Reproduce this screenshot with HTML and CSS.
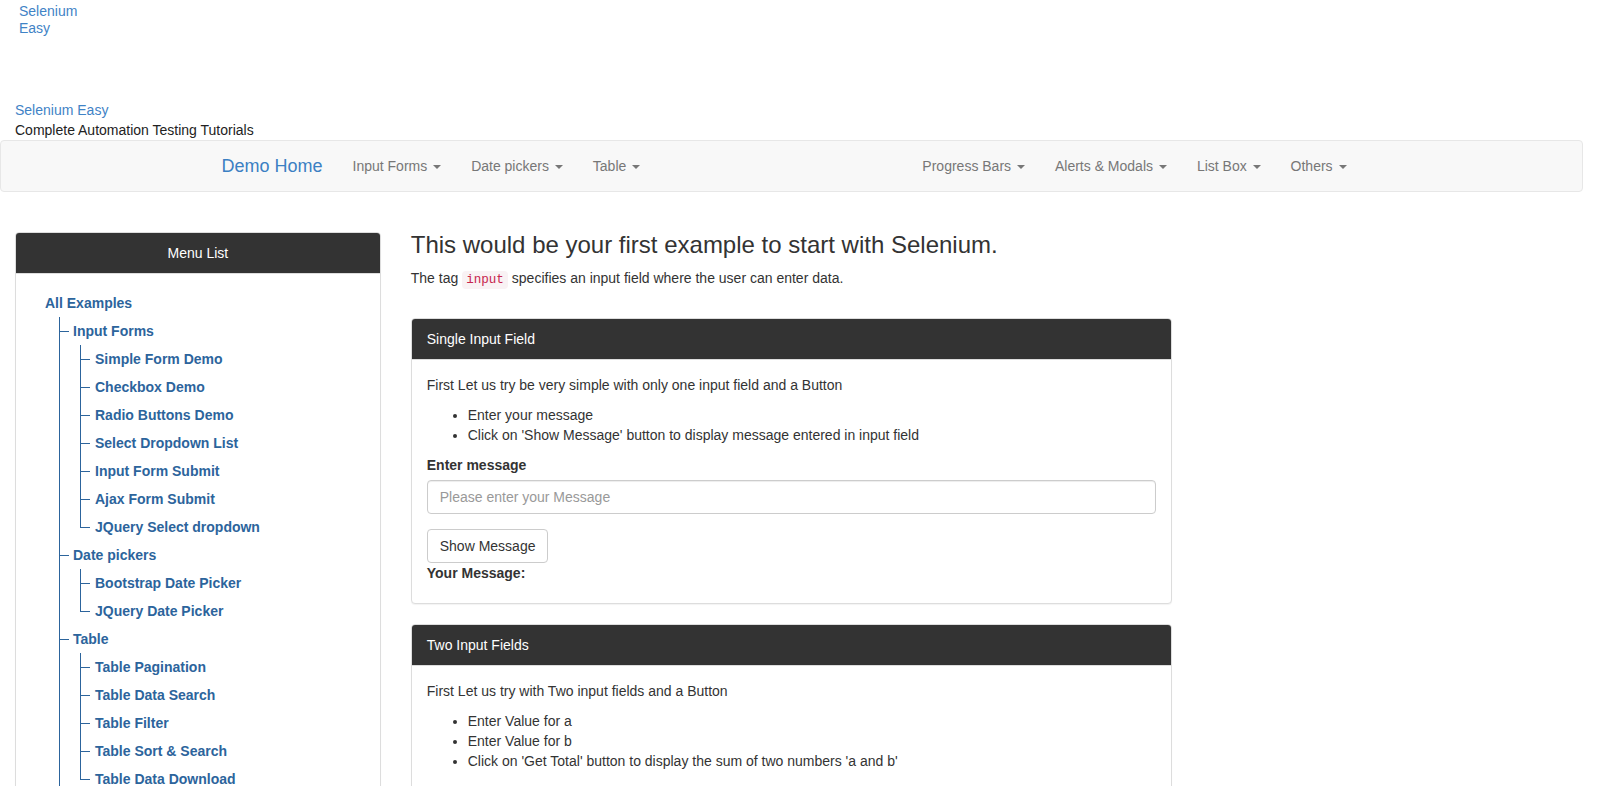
FILE: index.html
```html
<!DOCTYPE html>
<html lang="en">
<head>
<meta charset="utf-8">
<title>Selenium Easy Demo - Simple Form to Automate using Selenium</title>
<link rel="stylesheet" href="styles.css">
</head>
<body>
<div class="page">
  <header class="site-header">
    <div class="logo"><a href="#">Selenium Easy</a></div>
    <div class="site-title">
      <a href="#">Selenium Easy</a>
      <div class="site-slogan">Complete Automation Testing Tutorials</div>
    </div>
  </header>

  <nav class="navbar">
    <div class="container">
      <a class="navbar-brand" href="#">Demo Home</a>
      <ul class="nav">
        <li><a href="#">Input Forms <span class="caret"></span></a></li>
        <li><a href="#">Date pickers <span class="caret"></span></a></li>
        <li><a href="#">Table <span class="caret"></span></a></li>
      </ul>
      <ul class="nav nav-right">
        <li><a href="#">Progress Bars <span class="caret"></span></a></li>
        <li><a href="#">Alerts &amp; Modals <span class="caret"></span></a></li>
        <li><a href="#">List Box <span class="caret"></span></a></li>
        <li><a href="#">Others <span class="caret"></span></a></li>
      </ul>
    </div>
  </nav>

  <div class="layout">
    <aside class="col-side">
      <div class="panel side-panel">
        <div class="panel-heading centered">Menu List</div>
        <div class="panel-body">
          <ul class="tree">
            <li class="root">
              <a href="#" class="node">All Examples</a>
              <ul class="branch lvl1">
                <li>
                  <a href="#" class="node">Input Forms</a>
                  <ul class="branch lvl2">
                    <li><a href="#" class="node">Simple Form Demo</a></li>
                    <li><a href="#" class="node">Checkbox Demo</a></li>
                    <li><a href="#" class="node">Radio Buttons Demo</a></li>
                    <li><a href="#" class="node">Select Dropdown List</a></li>
                    <li><a href="#" class="node">Input Form Submit</a></li>
                    <li><a href="#" class="node">Ajax Form Submit</a></li>
                    <li><a href="#" class="node">JQuery Select dropdown</a></li>
                  </ul>
                </li>
                <li>
                  <a href="#" class="node">Date pickers</a>
                  <ul class="branch lvl2">
                    <li><a href="#" class="node">Bootstrap Date Picker</a></li>
                    <li><a href="#" class="node">JQuery Date Picker</a></li>
                  </ul>
                </li>
                <li>
                  <a href="#" class="node">Table</a>
                  <ul class="branch lvl2">
                    <li><a href="#" class="node">Table Pagination</a></li>
                    <li><a href="#" class="node">Table Data Search</a></li>
                    <li><a href="#" class="node">Table Filter</a></li>
                    <li><a href="#" class="node">Table Sort &amp; Search</a></li>
                    <li><a href="#" class="node">Table Data Download</a></li>
                  </ul>
                </li>
                <li>
                  <a href="#" class="node">Progress Bars &amp; Sliders</a>
                  <ul class="branch lvl2">
                    <li><a href="#" class="node">JQuery Download Progress bars</a></li>
                    <li><a href="#" class="node">Bootstrap Download Progress bar</a></li>
                    <li><a href="#" class="node">Drag &amp; Drop Sliders</a></li>
                  </ul>
                </li>
                <li>
                  <a href="#" class="node">Alerts &amp; Modals</a>
                </li>
              </ul>
            </li>
          </ul>
        </div>
      </div>
    </aside>

    <main class="col-main">
      <h3 class="page-title">This would be your first example to start with Selenium.</h3>
      <p>The tag <code>input</code> specifies an input field where the user can enter data.</p>

      <div class="panel first-panel">
        <div class="panel-heading">Single Input Field</div>
        <div class="panel-body">
          <p>First Let us try be very simple with only one input field and a Button</p>
          <ul class="steps">
            <li>Enter your message</li>
            <li>Click on 'Show Message' button to display message entered in input field</li>
          </ul>
          <form class="demo-form">
            <div class="form-group">
              <label for="user-message">Enter message</label>
              <input type="text" class="form-control" id="user-message" placeholder="Please enter your Message">
            </div>
            <button type="button" class="btn">Show Message</button>
          </form>
          <div class="result"><label>Your Message:</label></div>
        </div>
      </div>

      <div class="panel">
        <div class="panel-heading">Two Input Fields</div>
        <div class="panel-body">
          <p>First Let us try with Two input fields and a Button</p>
          <ul class="steps">
            <li>Enter Value for a</li>
            <li>Enter Value for b</li>
            <li>Click on 'Get Total' button to display the sum of two numbers 'a and b'</li>
          </ul>
          <form class="demo-form">
            <div class="form-group">
              <label for="sum1">Enter a</label>
              <input type="text" class="form-control" id="sum1" placeholder="Enter value">
            </div>
          </form>
        </div>
      </div>
    </main>
  </div>
</div>
</body>
</html>
```

FILE: styles.css
```css
* {
  box-sizing: border-box;
}

html, body {
  margin: 0;
  padding: 0;
  background: #fff;
}

body {
  font-family: "Liberation Sans", Arial, Helvetica, sans-serif;
  font-size: 14px;
  line-height: 20px;
  color: #333;
}

a {
  color: #337ab7;
  text-decoration: none;
}

.page {
  width: 1583px;
}

/* Header */
.site-header {
  display: block;
}

.logo {
  height: 100px;
  padding-top: 3px;
  margin-left: 19px;
  width: 70px;
  line-height: 17px;
}

.logo a {
  color: #3f83c6;
}

.site-title {
  margin-left: 15px;
}

.site-title a {
  color: #3f83c6;
}

.site-slogan {
  color: #222;
}

/* Navbar */
.navbar {
  height: 52px;
  background: #f8f8f8;
  border: 1px solid #e7e7e7;
  border-radius: 4px;
  margin-bottom: 20px;
}

.navbar .container {
  width: 1170px;
  margin: 0 auto;
  padding: 0 15px;
  display: flex;
  align-items: flex-start;
}

.navbar-brand {
  display: block;
  margin-left: -15px;
  padding: 15px;
  font-size: 18px;
  line-height: 20px;
  height: 50px;
  color: #3b80c3;
}

.nav {
  display: flex;
  list-style: none;
  margin: 0;
  padding: 0;
}

.nav-right {
  margin-left: auto;
}

.nav li a {
  display: block;
  padding: 15px;
  line-height: 20px;
  color: #777;
}

.caret {
  display: inline-block;
  width: 0;
  height: 0;
  margin-left: 2px;
  vertical-align: middle;
  border-top: 4px solid #777;
  border-left: 4px solid transparent;
  border-right: 4px solid transparent;
}

/* Layout */
.layout {
  display: flex;
  align-items: flex-start;
}

.col-side {
  width: 25%;
  padding: 0 15px;
}

.col-main {
  width: 50%;
  padding: 0 15px;
}

/* Panels */
.panel {
  background: #fff;
  border: 1px solid #ddd;
  border-radius: 4px;
  box-shadow: 0 1px 1px rgba(0, 0, 0, 0.05);
  margin-bottom: 20px;
}

.panel-heading {
  background: #333;
  color: #fff;
  padding: 10px 15px;
  border-bottom: 1px solid #ddd;
  border-radius: 3px 3px 0 0;
}

.panel-heading.centered {
  text-align: center;
}

.panel-body {
  padding: 15px;
}

.side-panel {
  margin-top: 20px;
}

.first-panel {
  margin-top: 28px;
}

/* Tree menu */
.tree {
  list-style: none;
  margin: 0;
  padding-left: 14px;
}

.node {
  display: block;
  padding: 4px 0;
  line-height: 20px;
  font-weight: bold;
  color: #2c649c;
  white-space: nowrap;
}

.tree .branch {
  list-style: none;
  padding: 0;
  margin: 0;
}

.tree .lvl1 {
  margin-left: 14px;
}

.tree .lvl2 {
  margin-left: 7px;
}

.branch > li {
  position: relative;
  padding-left: 14px;
}

.lvl2 > li {
  padding-left: 15px;
}

.branch > li::before {
  content: "";
  position: absolute;
  left: 0;
  top: 0;
  bottom: 0;
  border-left: 1px solid #2c649c;
}

.branch > li:last-child::before {
  bottom: auto;
  height: 15px;
}

.branch > li::after {
  content: "";
  position: absolute;
  left: 0;
  top: 14px;
  width: 10px;
  border-top: 1px solid #2c649c;
}

/* Main content */
.page-title {
  font-size: 24px;
  line-height: 1.1;
  font-weight: normal;
  margin: 20px 0 10px;
  color: #333;
}

p {
  margin: 0 0 10px;
}

code {
  font-family: "Liberation Mono", "DejaVu Sans Mono", monospace;
  font-size: 90%;
  padding: 2px 4px;
  color: #c7254e;
  background: #f9f2f4;
  border-radius: 4px;
}

.steps {
  margin: 0 0 10px;
  padding-left: 41px;
}

.demo-form {
  margin-top: 10px;
}

.form-group {
  margin-bottom: 15px;
}

label {
  display: inline-block;
  max-width: 100%;
  margin-bottom: 5px;
  font-weight: bold;
}

.form-control {
  display: block;
  width: 100%;
  height: 34px;
  padding: 6px 12px;
  font-family: inherit;
  font-size: 14px;
  line-height: 20px;
  color: #555;
  background: #fff;
  border: 1px solid #ccc;
  border-radius: 4px;
  box-shadow: inset 0 1px 1px rgba(0, 0, 0, 0.075);
}

.form-control::placeholder {
  color: #999;
}

.btn {
  display: inline-block;
  height: 34px;
  padding: 6px 12px;
  font-family: inherit;
  font-size: 14px;
  line-height: 20px;
  color: #333;
  background: #fff;
  border: 1px solid #ccc;
  border-radius: 4px;
  vertical-align: middle;
}
```
